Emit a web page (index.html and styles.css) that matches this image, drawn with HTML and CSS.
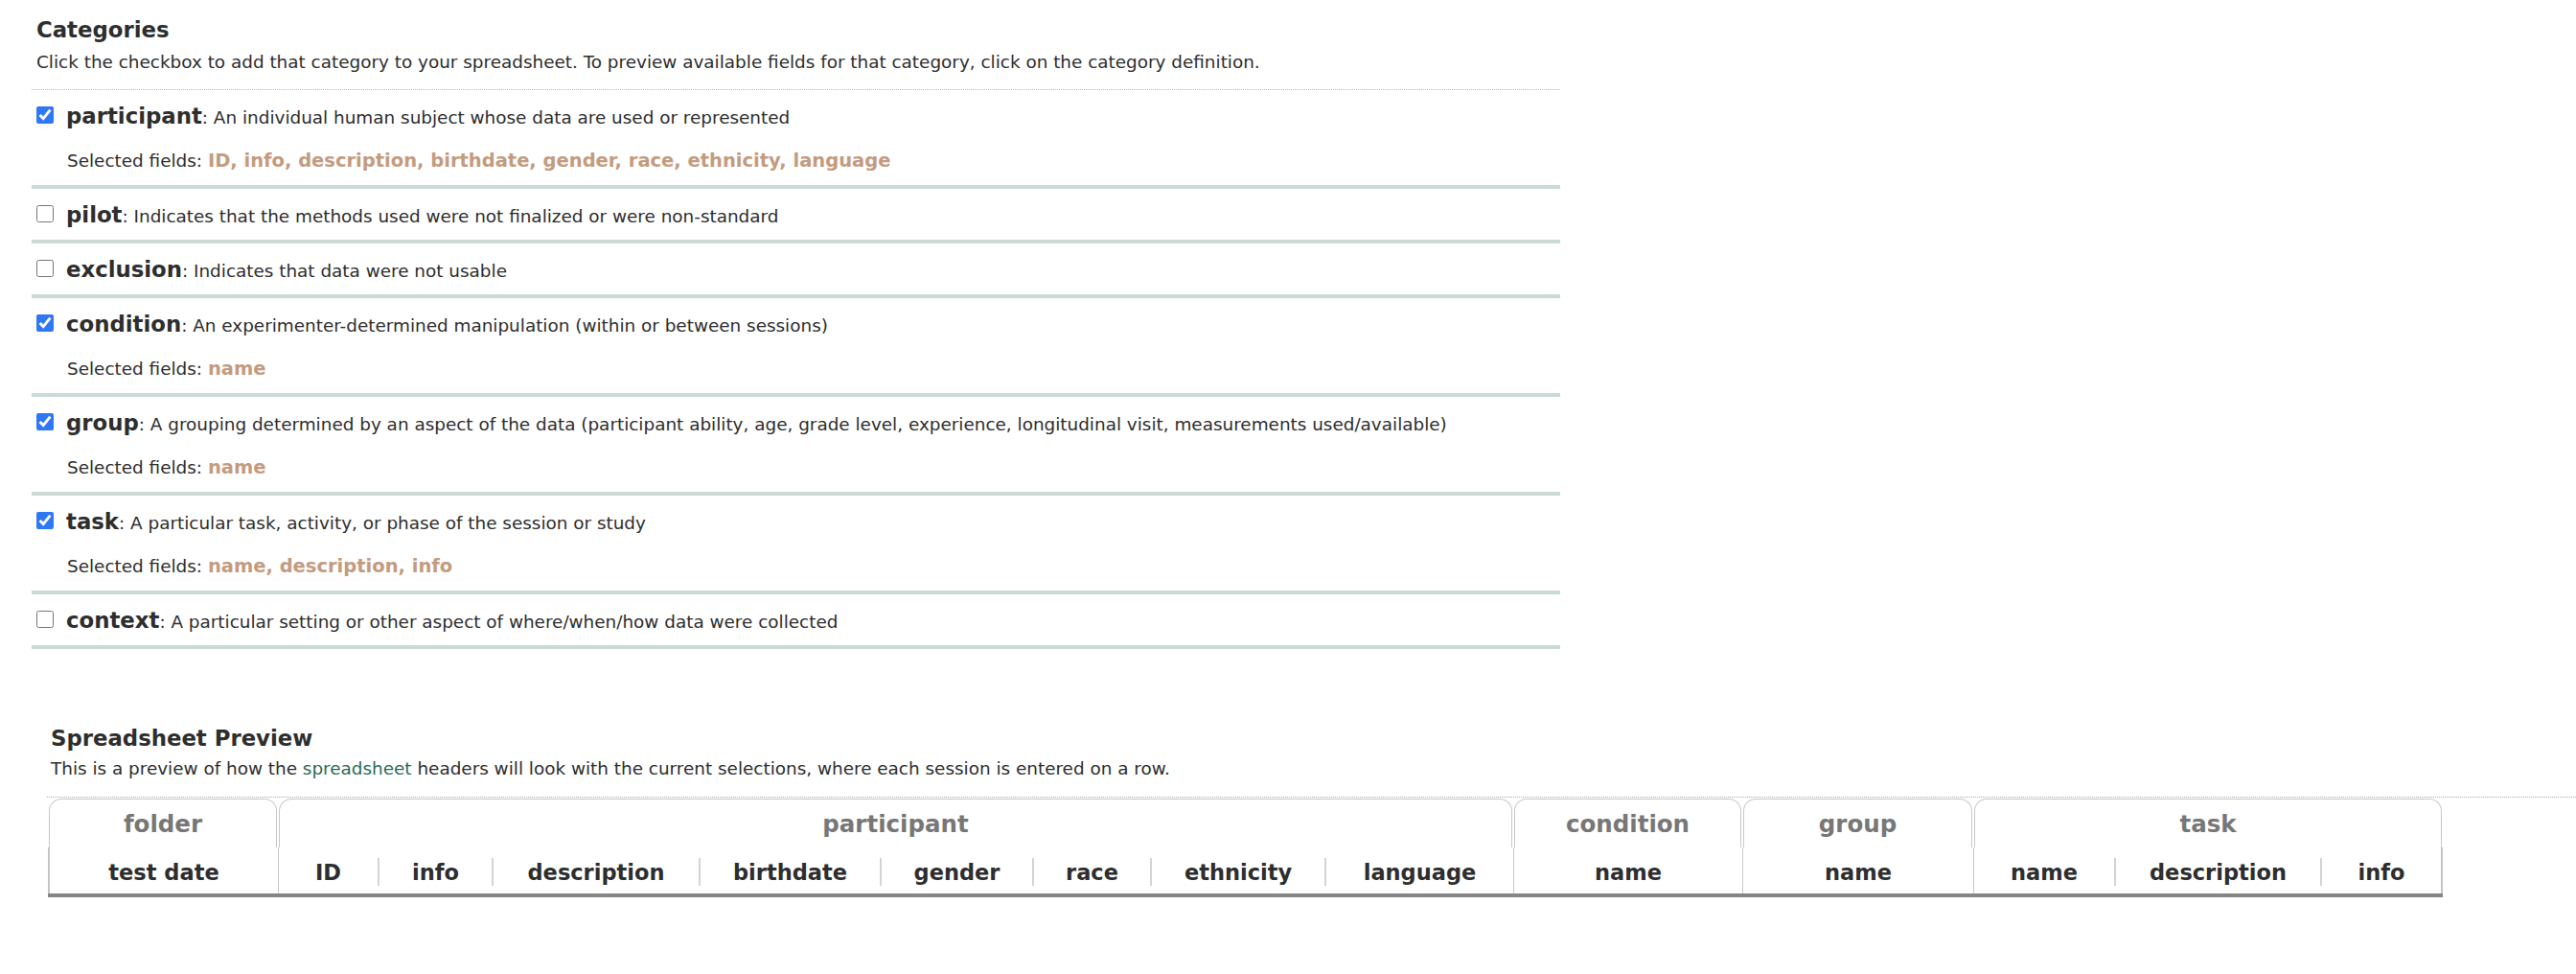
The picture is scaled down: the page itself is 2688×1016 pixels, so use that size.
FILE: index.html
```html
<!DOCTYPE html>
<html>
<head>
<meta charset="utf-8">
<title>Categories</title>
<link rel="stylesheet" href="styles.css">
</head>
<body>
<section class="cats">
  <h2 class="title">Categories</h2>
  <p class="intro">Click the checkbox to add that category to your spreadsheet. To preview available fields for that category, click on the category definition.</p>
  <ul class="cat-list">
    <li class="cat">
      <div class="cat-head"><input type="checkbox" checked><span class="label"><span class="name">participant</span><span class="desc">: An individual human subject whose data are used or represented</span></span></div>
      <div class="fields">Selected fields: <span class="vals">ID, info, description, birthdate, gender, race, ethnicity, language</span></div>
    </li>
    <li class="cat">
      <div class="cat-head"><input type="checkbox"><span class="label"><span class="name">pilot</span><span class="desc">: Indicates that the methods used were not finalized or were non-standard</span></span></div>
    </li>
    <li class="cat">
      <div class="cat-head"><input type="checkbox"><span class="label"><span class="name">exclusion</span><span class="desc">: Indicates that data were not usable</span></span></div>
    </li>
    <li class="cat">
      <div class="cat-head"><input type="checkbox" checked><span class="label"><span class="name">condition</span><span class="desc">: An experimenter-determined manipulation (within or between sessions)</span></span></div>
      <div class="fields">Selected fields: <span class="vals">name</span></div>
    </li>
    <li class="cat">
      <div class="cat-head"><input type="checkbox" checked><span class="label"><span class="name">group</span><span class="desc">: A grouping determined by an aspect of the data (participant ability, age, grade level, experience, longitudinal visit, measurements used/available)</span></span></div>
      <div class="fields">Selected fields: <span class="vals">name</span></div>
    </li>
    <li class="cat">
      <div class="cat-head"><input type="checkbox" checked><span class="label"><span class="name">task</span><span class="desc">: A particular task, activity, or phase of the session or study</span></span></div>
      <div class="fields">Selected fields: <span class="vals">name, description, info</span></div>
    </li>
    <li class="cat">
      <div class="cat-head"><input type="checkbox"><span class="label"><span class="name">context</span><span class="desc">: A particular setting or other aspect of where/when/how data were collected</span></span></div>
    </li>
  </ul>
</section>

<section class="preview">
  <h2 class="title">Spreadsheet Preview</h2>
  <p class="intro">This is a preview of how the <a class="link">spreadsheet</a> headers will look with the current selections, where each session is entered on a row.</p>
  <div class="sheet-wrap">
    <div class="sheet">
      <div class="grp span1">folder</div>
      <div class="grp span8">participant</div>
      <div class="grp span1">condition</div>
      <div class="grp span1">group</div>
      <div class="grp span3">task</div>

      <div class="col first outer-left"><span>test date</span></div>
      <div class="col first"><span>ID</span></div>
      <div class="col sep"><span>info</span></div>
      <div class="col sep"><span>description</span></div>
      <div class="col sep"><span>birthdate</span></div>
      <div class="col sep"><span>gender</span></div>
      <div class="col sep"><span>race</span></div>
      <div class="col sep"><span>ethnicity</span></div>
      <div class="col sep"><span>language</span></div>
      <div class="col first"><span>name</span></div>
      <div class="col first"><span>name</span></div>
      <div class="col first"><span>name</span></div>
      <div class="col sep"><span>description</span></div>
      <div class="col sep outer-right"><span>info</span></div>
    </div>
  </div>
</section>
</body>
</html>
```

FILE: styles.css
```css
body {
  margin: 0;
  font-family: "DejaVu Sans", "Liberation Sans", sans-serif;
  color: #2e2e2e;
  background: #fff;
}

.cats {
  margin-left: 33px;
  width: 1595px;
  padding-top: 16px;
}

.title {
  margin: 0;
  padding-left: 5px;
  font-size: 22.8px;
  line-height: 30px;
  font-weight: bold;
  color: #2e2e2e;
}

.intro {
  margin: 6px 0 0;
  padding-left: 5px;
  font-size: 18.4px;
  line-height: 26px;
}

.cat-list {
  list-style: none;
  margin: 15px 0 0;
  padding: 0;
  border-top: 1px dotted #b8b8b8;
}

.cat {
  padding: 8px 0 5px;
  border-bottom: 4px solid #cbdad6;
}

.cat-head {
  display: flex;
  align-items: center;
  height: 40px;
}

.cat-head input {
  width: 18px;
  height: 18px;
  margin: -4px 13px 0 5px;
  accent-color: #2f78f3;
  flex: none;
}

.label {
  line-height: 40px;
  white-space: nowrap;
}

.name {
  font-size: 22.8px;
  font-weight: bold;
}

.desc {
  font-size: 18.4px;
}

.fields {
  margin-top: 6px;
  padding-left: 37px;
  line-height: 40px;
  font-size: 18.4px;
}

.vals {
  color: #c39b7f;
  font-weight: bold;
  font-size: 19.5px;
}

.preview {
  margin-top: 78px;
}

.preview .title,
.preview .intro {
  padding-left: 53px;
}

.preview .intro {
  margin-top: 4px;
}

.link {
  color: #2d6b55;
  text-decoration: none;
}

.sheet-wrap {
  margin: 16px 0 0 49px;
  padding: 1px 0 0 1px;
  border-top: 1px dotted #a8a8a8;
}

.sheet {
  display: grid;
  grid-template-columns: 240px 104px 119px 216px 189px 159px 123px 182px 197px 239px 241px 147px 215px 128px;
  width: max-content;
  border-bottom: 4px solid #858585;
}

.grp {
  margin: 0 1px;
  height: 50px;
  border: 1px solid #c8c8c8;
  border-bottom: 0;
  border-radius: 13px 13px 0 0;
  display: flex;
  align-items: center;
  justify-content: center;
  color: #777;
  font-weight: bold;
  font-size: 24.5px;
}

.span1 { grid-column: span 1; }
.span3 { grid-column: span 3; }
.span8 { grid-column: span 8; }

.col {
  padding: 11px 0 8px;
  font-weight: bold;
  font-size: 22.5px;
  color: #2e2e2e;
}

.col span {
  display: flex;
  height: 29px;
  align-items: center;
  justify-content: center;
}

.col.sep span {
  border-left: 2px solid #d4d4d4;
}

.col.first {
  border-left: 1px solid #cacaca;
}

.col.outer-left {
  border-left: 2px solid #c4c4c4;
}

.col.outer-right {
  border-right: 2px solid #c4c4c4;
}
```
